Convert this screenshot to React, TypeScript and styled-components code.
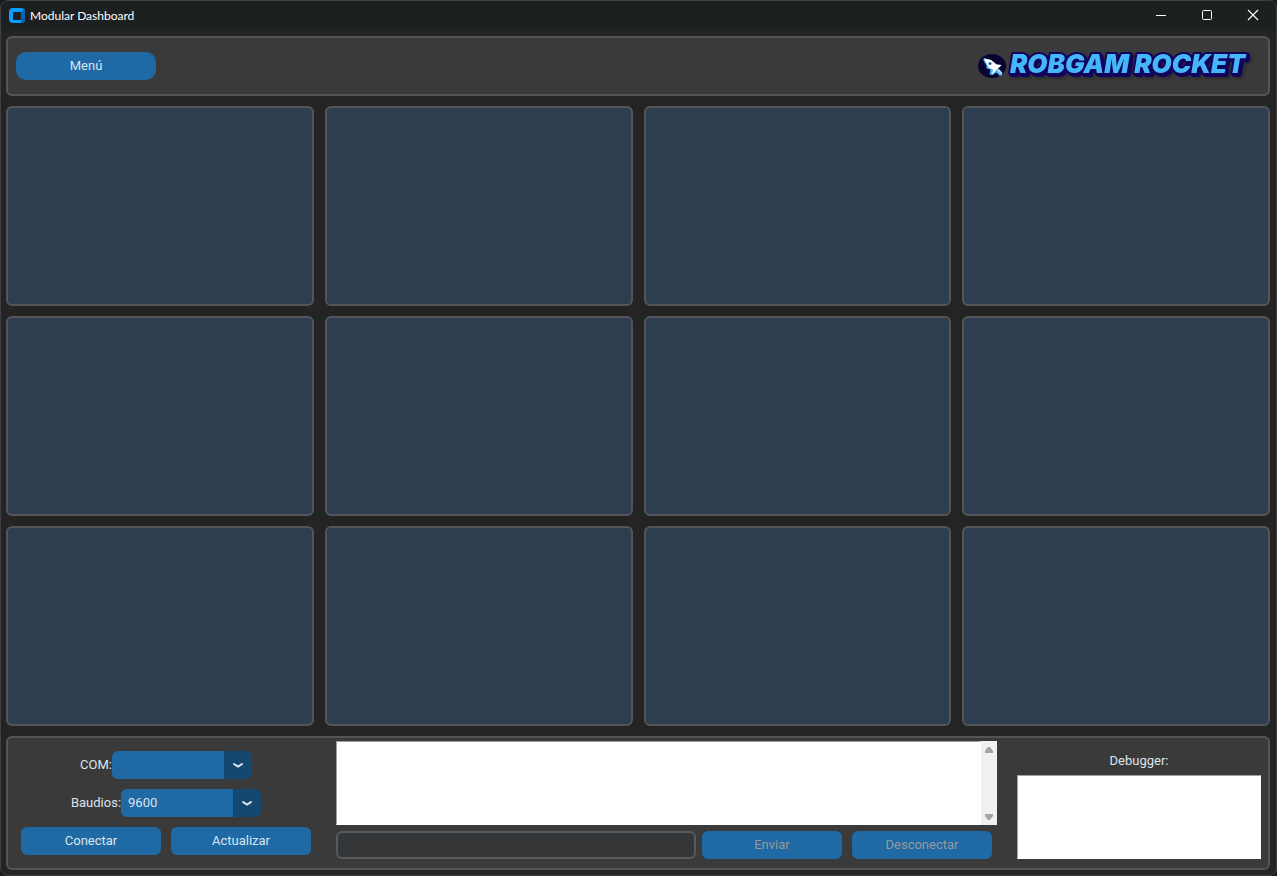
import React from "react";
import styled, { createGlobalStyle } from "styled-components";

const GlobalStyle = createGlobalStyle`
  * { box-sizing: border-box; }
  body { margin: 0; background: #1b1b1f; }
`;

const Window = styled.div`
  min-height: 100vh;
  display: flex;
  flex-direction: column;
  background: #242424;
  border: 1px solid #3f4041;
  border-radius: 8px;
  overflow: hidden;
  color: #dce4ee;
  font: 13px/16px Roboto, sans-serif;
`;

const TitleBar = styled.header`
  height: 30px;
  display: flex;
  align-items: center;
  padding-left: 8px;
  background: #1c2021;
`;

const Title = styled.h1`
  flex: 1;
  margin: 0 0 0 4px;
  color: #fff;
  font: 400 12px/16px Lato, sans-serif;
`;

const WindowButton = styled.button`
  width: 46px;
  height: 30px;
  display: flex;
  align-items: center;
  justify-content: center;
  padding: 0 0 2px;
  border: 0;
  background: transparent;
  color: #fff;
`;

const Content = styled.main`
  flex: 1;
  display: flex;
  flex-direction: column;
  gap: 10px;
  padding: 5px 6px 5px 5px;
`;

const Panel = styled.section`
  border: 2px solid #555;
  border-radius: 6px;
  background: #3a3a3a;
`;

const TopPanel = styled(Panel)`
  height: 60px;
  display: flex;
  align-items: center;
  justify-content: space-between;
  padding: 0 18px 0 8px;
`;

const Modules = styled.div`
  flex: 1;
  display: grid;
  grid-template-columns: repeat(4, 1fr);
  grid-template-rows: repeat(3, minmax(120px, 1fr));
  gap: 10px 11px;
`;

const Module = styled(Panel)`
  background: #2d3e50;
`;

const BottomPanel = styled(Panel)`
  display: flex;
  padding: 3px 7px 9px 13px;
`;

const Button = styled.button<{ $round?: boolean }>`
  width: 140px;
  height: 28px;
  flex: none;
  padding: 0;
  border: 0;
  border-radius: ${(p) => (p.$round ? 10 : 6)}px;
  background: #1f6aa5;
  color: #dce4ee;
  font: inherit;
  &:disabled { color: #999; }
`;

const Connection = styled.form`
  display: flex;
  flex-direction: column;
  align-items: center;
  gap: 10px;
  padding-top: 10px;
  margin-right: 25px;
`;

const Field = styled.div`
  display: flex;
  align-items: center;
`;

const ButtonRow = styled.div`
  display: flex;
  gap: 10px;
`;

const SelectBox = styled.div`
  position: relative;
  width: 140px;
  height: 28px;
  svg { position: absolute; right: 8px; top: 10px; pointer-events: none; }
`;

const Select = styled.select`
  appearance: none;
  width: 100%;
  height: 100%;
  padding: 0 28px 0 7px;
  border: 0;
  border-radius: 6px;
  background: linear-gradient(to left, #144870 28px, #1f6aa5 28px);
  color: #dce4ee;
  font: inherit;
`;

const Console = styled.div`
  flex: 1;
  min-width: 0;
  display: flex;
  flex-direction: column;
  gap: 6px;
`;

const LogBox = styled.div`
  display: flex;
  height: 84px;
`;

const TextArea = styled.textarea`
  flex: 1;
  width: 100%;
  min-width: 0;
  height: 84px;
  display: block;
  resize: none;
  overflow: hidden;
  border: 1px solid #fff;
  border-top-color: #a0a0a0;
  border-left-color: #a0a0a0;
  border-radius: 0;
  background: #fff;
  color: #000;
  font: 13px "Liberation Mono", monospace;
`;

const ScrollTrack = styled.div`
  width: 16px;
  display: flex;
  flex-direction: column;
  align-items: center;
  justify-content: space-between;
  padding: 5px 0 4px;
  background: #f0f0f0;
`;

const SendRow = styled.form`
  display: flex;
  gap: 10px;
  padding-right: 5px;
`;

const Entry = styled.input`
  flex: 1;
  min-width: 0;
  height: 28px;
  margin-right: -4px;
  padding: 0 6px;
  border: 2px solid #565b5e;
  border-radius: 6px;
  background: #343638;
  color: #dce4ee;
  font: inherit;
`;

const Debugger = styled.div`
  width: 244px;
  flex: none;
  display: flex;
  flex-direction: column;
  gap: 6px;
  margin-left: 20px;
  padding-top: 12px;
  text-align: center;
`;

const LogoArt = styled.svg`
  flex: none;
  overflow: visible;
`;

const LogoText = styled.text`
  font: italic 900 26px Inter, sans-serif;
  fill: #45b6f7;
  stroke: #10045c;
  stroke-width: 4px;
  stroke-linejoin: round;
  paint-order: stroke;
  filter: drop-shadow(1px 1px 0 #10045c) drop-shadow(1px 1px 0 #10045c) drop-shadow(2px 2px 1px #2c2c30);
`;

const AppIcon = () => (
  <svg width="17" height="17" viewBox="0 0 17 17" aria-hidden="true">
    <rect x="0" y="0" width="16" height="15" rx="4" fill="#0a9cff" />
    <path d="M12 4l3-3a4 4 0 0 1 1 3v7a4 4 0 0 1-4 4z" fill="#0563b4" />
    <rect x="4" y="4" width="8" height="8" rx="1" fill="#1c2021" />
  </svg>
);

const Chevron = () => (
  <svg width="12" height="8" viewBox="0 0 12 8" aria-hidden="true">
    <path d="M2 3l4 2.6L10 3" fill="none" stroke="#dce4ee" strokeWidth="2" strokeLinecap="round" strokeLinejoin="round" />
  </svg>
);

const ScrollArrow = ({ down }: { down?: boolean }) => (
  <svg width="8" height="7" viewBox="0 0 8 7" aria-hidden="true">
    <path d={down ? "M0 0h8v2L5 6H3L0 2z" : "M3 1h2l3 4v2H0V5z"} fill="#a3a3a3" />
  </svg>
);

const Logo = () => (
  <LogoArt width="275" height="34" viewBox="0 0 275 34" role="img" aria-label="Robgam Rocket">
    <ellipse cx="17" cy="17" rx="14" ry="12" fill="#09042f" />
    <path d="M8 10l2-.5 6 1.500 5.500 4.500 5 .5-3.500 3.500 4.500 6-2.500 1.500-3.500-3.500-4 2.500-3-.5 1-5-4-1 0-3-2-3z" fill="#45b6f7" />
    <path d="M9 9.500l7 1.500 5.500 4.500 5 .5-4 4-5.500 5.500 1-5-4.500-2-2-4z" fill="#fff" />
    <path d="M22 21.500l2-1.500 3.500 4-1.500 1.500z" fill="#a8defc" />
    <circle cx="15" cy="14.500" r="1.500" fill="#1a5aa0" />
    <LogoText x="35" y="24">ROBGAM ROCKET</LogoText>
  </LogoArt>
);

export default function App() {
  return (
    <>
      <GlobalStyle />
      <Window>
        <TitleBar>
          <AppIcon />
          <Title>Modular Dashboard</Title>
          <WindowButton aria-label="Minimizar">
            <svg width="12" height="12"><path d="M1 6.500h10" stroke="currentColor" /></svg>
          </WindowButton>
          <WindowButton aria-label="Maximizar">
            <svg width="12" height="12"><rect x="1.500" y="1.500" width="9" height="9" rx="1" fill="none" stroke="currentColor" /></svg>
          </WindowButton>
          <WindowButton aria-label="Cerrar">
            <svg width="12" height="12"><path d="M1 1l10 10M11 1L1 11" stroke="currentColor" strokeWidth="1.100" /></svg>
          </WindowButton>
        </TitleBar>
        <Content>
          <TopPanel>
            <Button $round>Menú</Button>
            <Logo />
          </TopPanel>
          <Modules>
            {Array.from({ length: 12 }, (_, i) => <Module key={i} />)}
          </Modules>
          <BottomPanel>
            <Connection onSubmit={(e) => e.preventDefault()}>
              <Field>
                <label htmlFor="com">COM:</label>
                <SelectBox>
                  <Select id="com"><option value="" aria-label="Ninguno" /></Select>
                  <Chevron />
                </SelectBox>
              </Field>
              <Field>
                <label htmlFor="baud">Baudios:</label>
                <SelectBox>
                  <Select id="baud" defaultValue="9600"><option>9600</option></Select>
                  <Chevron />
                </SelectBox>
              </Field>
              <ButtonRow>
                <Button>Conectar</Button>
                <Button type="button">Actualizar</Button>
              </ButtonRow>
            </Connection>
            <Console>
              <LogBox>
                <TextArea aria-label="Monitor serie" />
                <ScrollTrack>
                  <ScrollArrow />
                  <ScrollArrow down />
                </ScrollTrack>
              </LogBox>
              <SendRow onSubmit={(e) => e.preventDefault()}>
                <Entry aria-label="Mensaje" />
                <Button disabled>Enviar</Button>
                <Button type="button" disabled>Desconectar</Button>
              </SendRow>
            </Console>
            <Debugger>
              <label htmlFor="debug">Debugger:</label>
              <TextArea id="debug" />
            </Debugger>
          </BottomPanel>
        </Content>
      </Window>
    </>
  );
}
